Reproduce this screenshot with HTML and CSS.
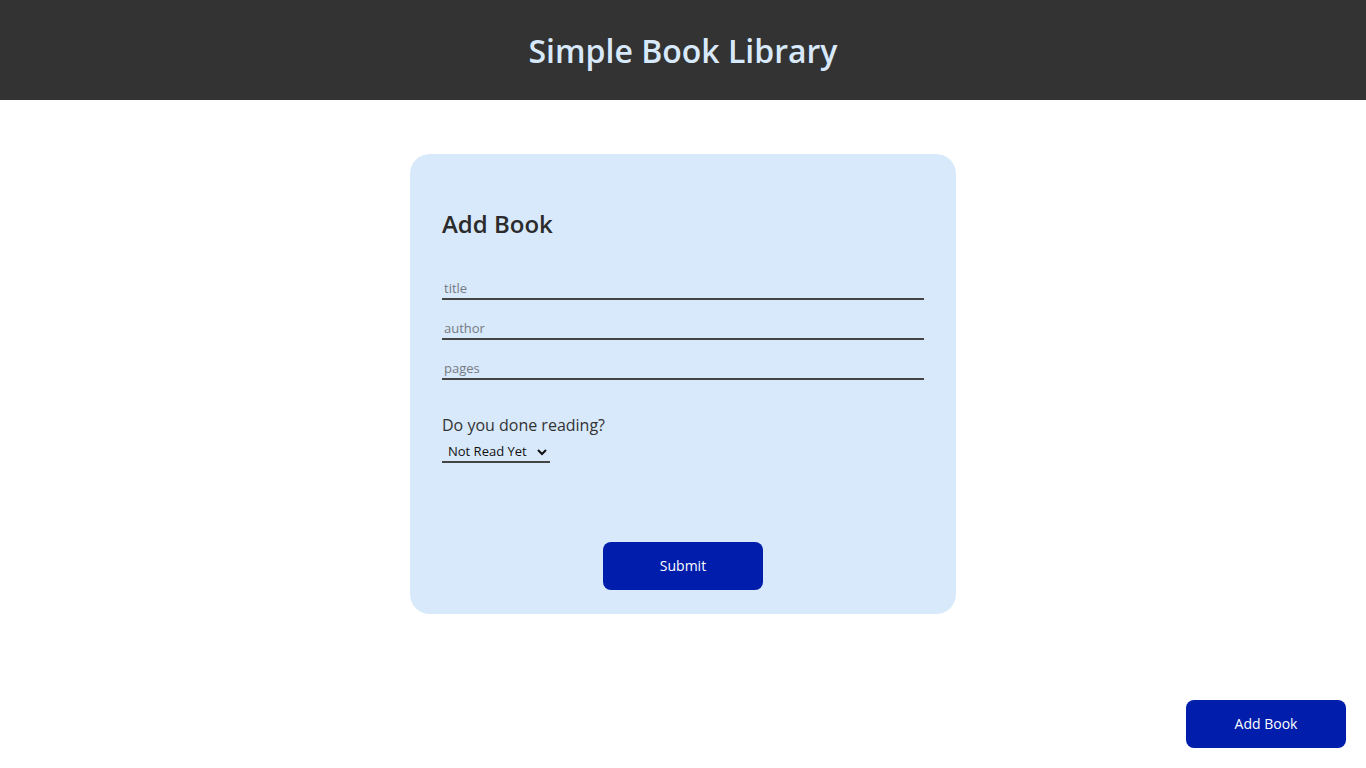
FILE: index.html
```html
<!DOCTYPE html>
<html lang="en">
<head>
<meta charset="utf-8">
<title>Simple Book Library</title>
<link rel="stylesheet" href="styles.css">
</head>
<body>
<header class="site-header">
  <h1 class="site-title">Simple Book Library</h1>
</header>
<main class="main">
  <form class="book-form">
    <h2 class="form-title">Add Book</h2>
    <div class="fields">
      <input class="field" type="text" placeholder="title">
      <input class="field" type="text" placeholder="author">
      <input class="field" type="text" placeholder="pages">
    </div>
    <div class="status">
      <label class="status-label" for="read">Do you done reading?</label>
      <select class="status-select" id="read">
        <option>Not Read Yet</option>
        <option>Read</option>
      </select>
    </div>
    <div class="actions">
      <button class="btn" type="button">Submit</button>
    </div>
  </form>
</main>
<button class="btn btn-fixed" type="button">Add Book</button>
</body>
</html>
```

FILE: styles.css
```css
* { box-sizing: border-box; }
body {
  margin: 0;
  font-family: "Open Sans", "Liberation Sans", sans-serif;
  background: #ffffff;
  color: #333333;
}
.site-header {
  height: 100px;
  background: #333333;
  display: flex;
  align-items: center;
  justify-content: center;
}
.site-title {
  margin: 0;
  font-size: 32px;
  font-weight: 600;
  color: #d8e9fb;
  letter-spacing: 0;
}
.main {
  display: flex;
  justify-content: center;
  padding-top: 54px;
}
.book-form {
  width: 546px;
  height: 460px;
  background: #d8e9fb;
  border-radius: 20px;
  padding: 52px 32px 24px;
  display: flex;
  flex-direction: column;
}
.form-title {
  margin: 0;
  font-size: 24px;
  font-weight: 600;
  line-height: 36px;
  color: #2b2b2b;
}
.fields {
  display: flex;
  flex-direction: column;
  gap: 18px;
  margin-top: 36px;
}
.field {
  display: block;
  width: 100%;
  height: 22px;
  border: none;
  border-bottom: 2px solid #444444;
  background: transparent;
  padding: 0 2px;
  font-family: inherit;
  font-size: 13px;
  color: #333;
  outline: none;
}
.field::placeholder { color: #777a80; }
.status {
  margin-top: 33px;
  display: flex;
  flex-direction: column;
  align-items: flex-start;
}
.status-label {
  font-size: 16px;
  line-height: 24px;
  color: #333;
}
.status-select {
  margin-top: 4px;
  width: 108px;
  height: 22px;
  border: none;
  border-bottom: 2px solid #444444;
  background: transparent;
  font-family: inherit;
  font-size: 13px;
  color: #111;
  padding: 0 0 0 2px;
  outline: none;
}
.actions {
  margin-top: auto;
  display: flex;
  justify-content: center;
}
.btn {
  width: 160px;
  height: 48px;
  border: none;
  border-radius: 8px;
  background: #001eab;
  color: #ffffff;
  font-family: inherit;
  font-size: 14px;
  font-weight: 500;
  line-height: 1;
  cursor: pointer;
}
.btn-fixed {
  position: fixed;
  right: 20px;
  bottom: 20px;
}
```
